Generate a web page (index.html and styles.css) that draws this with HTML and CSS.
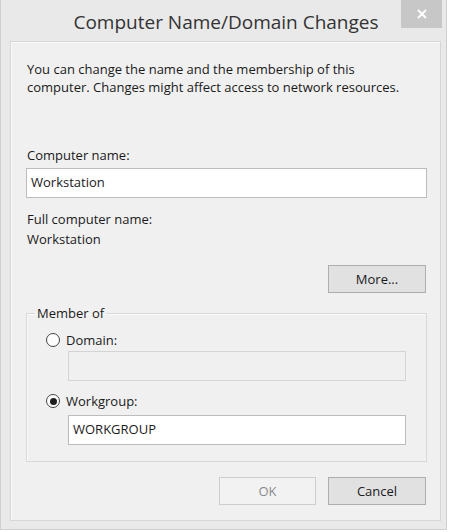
FILE: index.html
```html
<!DOCTYPE html>
<html>
<head>
<meta charset="utf-8">
<link rel="stylesheet" href="styles.css">
</head>
<body>
<div class="window">
  <div class="titlebar">
    <div class="title">Computer Name/Domain Changes</div>
    <div class="close"><svg width="10" height="10" viewBox="0 0 10 10"><path d="M1 1 L9 9 M9 1 L1 9" stroke="#fff" stroke-width="1.8" fill="none"/></svg></div>
  </div>
  <div class="client">
    <p class="intro">You can change the name and the membership of this computer. Changes might affect access to network resources.</p>
    <div class="label first">Computer name:</div>
    <div class="input">Workstation</div>
    <div class="label full">Full computer name:</div>
    <div class="label">Workstation</div>
    <div class="row-right more-row"><div class="btn">More...</div></div>
    <fieldset class="group">
      <legend>Member of</legend>
      <div class="radio-row"><span class="radio"></span><span>Domain:</span></div>
      <div class="input sub disabled"></div>
      <div class="radio-row wg"><span class="radio checked"></span><span>Workgroup:</span></div>
      <div class="input sub wg-input">WORKGROUP</div>
    </fieldset>
    <div class="row-right actions"><div class="btn disabled-btn">OK</div><div class="btn">Cancel</div></div>
  </div>
</div>
</body>
</html>
```
FILE: styles.css
```css
html, body { margin: 0; padding: 0; background: #ffffff; }
body { font-family: "Open Sans", "Noto Sans", sans-serif; font-size: 13px; color: #1a1a1a; }
.window {
  width: 447px; height: 530px; box-sizing: border-box;
  background: #e9e9e9; border: 1px solid #cfcfcf; border-top: none;
  padding: 0 5px 0 9px;
}
.titlebar { height: 41px; position: relative; display: flex; justify-content: center; }
.title { font-size: 19px; color: #333; line-height: 20px; padding-top: 12px; margin-left: 1px; }
.close {
  position: absolute; right: -1px; top: 0; width: 41px; height: 28px;
  background: #c7c7c7; display: flex; align-items: center; justify-content: center;
}
.client {
  height: 480px; box-sizing: border-box;
  background: #f0f0f0; border: 1px solid #d6d6d6; box-shadow: inset 1px 1px 0 #fbfbfb;
  padding: 18px 13px 0 15px;
}
.intro { margin: 0; line-height: 18px; padding-left: 1px; max-width: 385px; }
.label { line-height: 20px; padding-left: 1px; }
.label.first { margin-top: 49px; }
.label.full { margin-top: 11px; }
.input {
  height: 30px; box-sizing: border-box; background: #fff;
  border: 1px solid #bcbcbc; padding: 0 4px; line-height: 27px; margin-top: 3px;
}
.more-row { margin-top: 16px; }
.row-right { display: flex; justify-content: flex-end; gap: 12px; padding-right: 1px; }
.btn {
  width: 98px; height: 28px; box-sizing: border-box;
  background: #e1e1e1; border: 1px solid #adadad;
  display: flex; align-items: center; justify-content: center;
}
.disabled-btn { background: #f2f2f2; border-color: #cdcdcd; color: #8a8a8a; width: 97px; }
.group {
  margin: 12px 0 0 0; padding: 0 20px 16px 19px; border: 1px solid #d9d9d9;
  box-shadow: inset 1px 1px 0 #fafafa;
}
.group legend { padding: 0 2px; margin-left: -11px; line-height: 16px; }
.radio-row { display: flex; align-items: center; gap: 6px; height: 16px; margin-top: 11px; }
.radio-row.wg { margin-top: 12px; }
.radio {
  width: 14px; height: 14px; box-sizing: border-box; border-radius: 50%;
  border: 1px solid #444; background: #fdfdfd; display: flex; align-items: center; justify-content: center;
}
.radio.checked::after { content: ""; width: 7px; height: 7px; border-radius: 50%; background: #1e1e1e; }
.input.sub { margin-left: 22px; margin-top: 3px; }
.input.sub.wg-input { margin-top: 6px; }
.input.disabled { background: #f0f0f0; border-color: #d4d4d4; }
.actions { margin-top: 15px; }
```
